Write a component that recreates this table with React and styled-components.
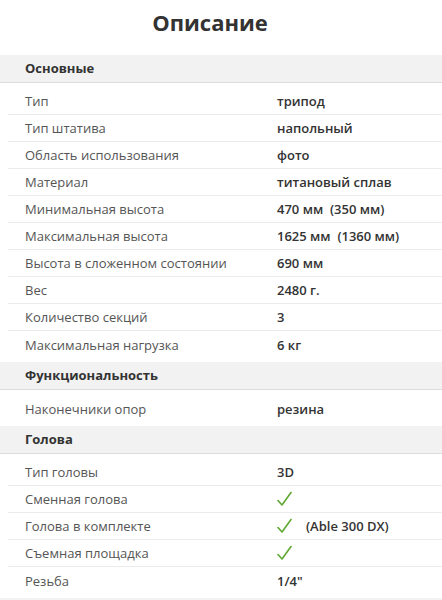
import styled, { createGlobalStyle } from "styled-components";

const sections = [
  {
    title: "Основные",
    rows: [
      ["Тип", "трипод"],
      ["Тип штатива", "напольный"],
      ["Область использования", "фото"],
      ["Материал", "титановый сплав"],
      ["Минимальная высота", "470 мм  (350 мм)"],
      ["Максимальная высота", "1625 мм  (1360 мм)"],
      ["Высота в сложенном состоянии", "690 мм"],
      ["Вес", "2480 г."],
      ["Количество секций", "3"],
      ["Максимальная нагрузка", "6 кг"],
    ],
  },
  {
    title: "Функциональность",
    rows: [["Наконечники опор", "резина"]],
  },
  {
    title: "Голова",
    rows: [
      ["Тип головы", "3D"],
      ["Сменная голова", { check: true }],
      ["Голова в комплекте", { check: true, note: "(Able 300 DX)" }],
      ["Съемная площадка", { check: true }],
      ["Резьба", "1/4\""],
    ],
  },
  { title: "", rows: [] },
];

const Check = () => (
  <svg width="15" height="16" viewBox="0 0 15 16" fill="none">
    <path d="M1 9.5 L5 14 L14 1.5" stroke="#5fa832" strokeWidth="1.6" strokeLinecap="round" strokeLinejoin="round" />
  </svg>
);

const App = () => {
  return (
    <>
      <GlobalStyle />
      <Page>
        <Title>Описание</Title>
        {sections.map((s, i) => (
          <Section key={i}>
            <SectionHead>{s.title}</SectionHead>
            {s.rows.length > 0 && (
              <Body>
                {s.rows.map(([label, value]) => (
                  <Row key={label}>
                    <Label>{label}</Label>
                    <Value>
                      {typeof value === "string" ? (
                        value
                      ) : (
                        <>
                          <Check />
                          {value.note && <Note>{value.note}</Note>}
                        </>
                      )}
                    </Value>
                  </Row>
                ))}
              </Body>
            )}
          </Section>
        ))}
      </Page>
    </>
  );
};

const GlobalStyle = createGlobalStyle`
  body {
    margin: 0;
    background: #ffffff;
    font-family: "Open Sans", "Liberation Sans", sans-serif;
    color: #333;
  }
`;

const Page = styled.div`
  width: 442px;
  height: 600px;
  overflow: hidden;
`;

const Title = styled.h1`
  margin: 0;
  height: 55px;
  padding: 6px 22px 0 0;
  box-sizing: border-box;
  text-align: center;
  font-size: 22px;
  font-weight: 700;
  color: #333;
  line-height: 32px;
`;

const Section = styled.div``;

const SectionHead = styled.div`
  height: 28px;
  box-sizing: border-box;
  background: #f2f2f2;
  border-bottom: 1px solid #dcdcdc;
  padding-left: 25px;
  font-size: 13px;
  font-weight: 700;
  line-height: 27px;
  color: #333;
`;

const Body = styled.div`
  padding: 5px 0 4px 8px;
`;

const Row = styled.div`
  display: flex;
  align-items: center;
  height: 27px;
  box-sizing: border-box;
  border-bottom: 1px solid #ebebeb;
  font-size: 13px;

  &:last-child {
    border-bottom: none;
  }
`;

const Label = styled.div`
  width: 269px;
  padding-left: 17px;
  box-sizing: border-box;
  color: #555;
`;

const Value = styled.div`
  display: flex;
  align-items: center;
  font-weight: 600;
  color: #333;
  white-space: pre;
`;

const Note = styled.span`
  margin-left: 14px;
`;

export default App;
